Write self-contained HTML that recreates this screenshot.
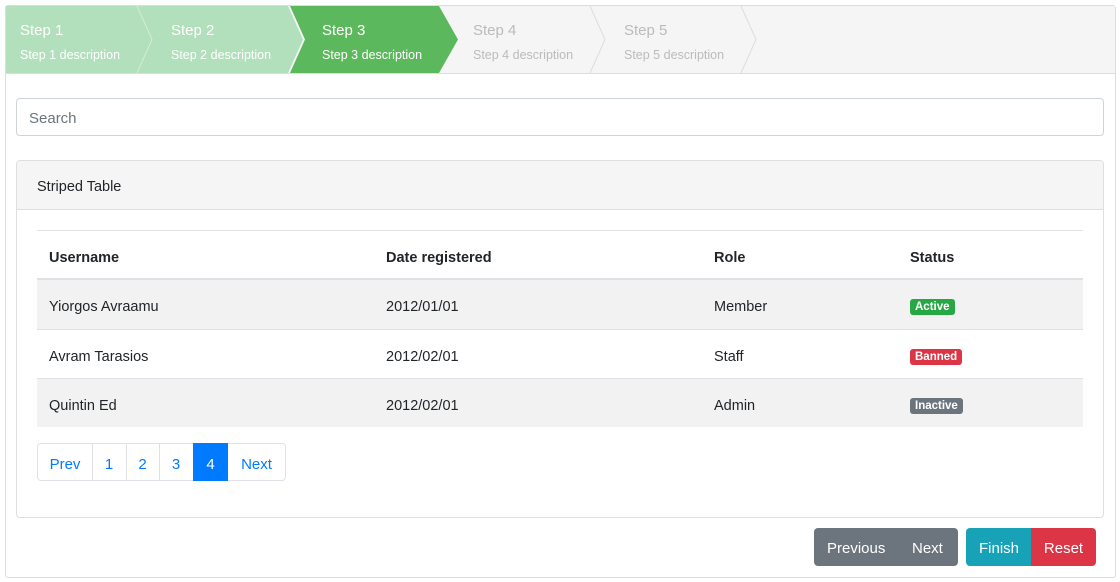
<!DOCTYPE html>
<html><head><meta charset="utf-8"><style>
*{box-sizing:border-box;margin:0;padding:0}
body{width:1120px;height:582px;background:#fff;font-family:"Liberation Sans",sans-serif;font-size:14.5px;color:#212529;position:relative;overflow:hidden}
.a{position:absolute}
.outer{left:5px;top:5px;width:1111px;height:573px;border:1px solid #ddd;border-radius:3px}
.st{position:absolute;font-size:15px}
.sd{position:absolute;font-size:12.5px}
.search{left:16px;top:98px;width:1088px;height:38px;border:1px solid #ced4da;border-radius:4px;padding:11px 12px;color:#6c757d;font-size:15px}
.card{left:16px;top:160px;width:1088px;height:358px;border:1px solid #dfdfdf;border-radius:4px;overflow:hidden}
.ch{height:49px;background:#f5f5f5;border-bottom:1px solid #dfdfdf;padding:18px 20px;font-size:14.5px}
.row{position:absolute;left:37px;width:1046px;height:49px;border-top:1px solid #dee2e6}
.row span{position:absolute;top:19px}
.b{position:absolute;top:19px;font-size:11.5px;font-weight:bold;color:#fff;padding:2px 5px;border-radius:3px}
.pg{position:absolute;top:443px;height:38px;border:1px solid #dee2e6;color:#007bff;text-align:center;padding-top:12px;font-size:15px}
.btn{position:absolute;top:528px;height:38px;color:#fff;font-size:15px;padding-top:12px;text-align:center}
</style></head><body>
<div class="a outer"></div>
<svg class="a" style="left:6px;top:6px" width="1109" height="68">
<rect x="0" y="0" width="1109" height="67" fill="#f5f5f5"/>
<polygon points="0,0 131,0 146,33.5 131,67 0,67" fill="#b2dfbc"/>
<polygon points="131,0 282,0 297,33.5 282,67 131,67 146,33.5" fill="#b2dfbc"/>
<polygon points="284,0 433,0 452,33.5 433,67 284,67 299,33.5" fill="#5cb85c"/>
<polyline points="131,0 146,33.5 131,67" fill="none" stroke="#d6ecd9" stroke-width="1"/>
<polyline points="584,0 599,33.5 584,67" fill="none" stroke="#ddd" stroke-width="1"/>
<polyline points="735,0 750,33.5 735,67" fill="none" stroke="#ddd" stroke-width="1"/>
<line x1="0" y1="67.5" x2="1109" y2="67.5" stroke="#ddd"/>
</svg>
<div class="st" style="left:20px;top:22px;color:#fff">Step 1</div><div class="sd" style="left:20px;top:48px;color:#fff">Step 1 description</div>
<div class="st" style="left:171px;top:22px;color:#fff">Step 2</div><div class="sd" style="left:171px;top:48px;color:#fff">Step 2 description</div>
<div class="st" style="left:322px;top:22px;color:#fff">Step 3</div><div class="sd" style="left:322px;top:48px;color:#fff">Step 3 description</div>
<div class="st" style="left:473px;top:22px;color:#bbb">Step 4</div><div class="sd" style="left:473px;top:48px;color:#bbb">Step 4 description</div>
<div class="st" style="left:624px;top:22px;color:#bbb">Step 5</div><div class="sd" style="left:624px;top:48px;color:#bbb">Step 5 description</div>
<div class="a search">Search</div>
<div class="a card"><div class="ch">Striped Table</div></div>
<div class="row" style="top:230px;font-weight:bold;border-bottom:2px solid #dee2e6;height:50px"><span style="left:12px">Username</span><span style="left:349px">Date registered</span><span style="left:677px">Role</span><span style="left:873px">Status</span></div>
<div class="row" style="top:280px;background:#f2f2f2;border-top:none"><span style="left:12px">Yiorgos Avraamu</span><span style="left:349px">2012/01/01</span><span style="left:677px">Member</span><b class="b" style="left:873px;background:#28a745">Active</b></div>
<div class="row" style="top:329px"><span style="left:12px">Avram Tarasios</span><span style="left:349px">2012/02/01</span><span style="left:677px">Staff</span><b class="b" style="left:873px;background:#dc3545">Banned</b></div>
<div class="row" style="top:378px;background:#f2f2f2"><span style="left:12px">Quintin Ed</span><span style="left:349px">2012/02/01</span><span style="left:677px">Admin</span><b class="b" style="left:873px;background:#6c757d">Inactive</b></div>
<div class="pg" style="left:37px;width:56px;border-radius:4px 0 0 4px">Prev</div>
<div class="pg" style="left:92px;width:35px;border-left:none">1</div>
<div class="pg" style="left:126px;width:34px;border-left:none">2</div>
<div class="pg" style="left:159px;width:35px;border-left:none">3</div>
<div class="pg" style="left:193px;width:35px;background:#007bff;border-color:#007bff;color:#fff">4</div>
<div class="pg" style="left:228px;width:58px;border-left:none;border-radius:0 4px 4px 0">Next</div>
<div class="btn" style="left:814px;width:144px;background:#6c757d;border-radius:4px"><span style="position:absolute;left:13px">Previous</span><span style="position:absolute;left:98px">Next</span></div>
<div class="btn" style="left:966px;width:66px;background:#17a2b8;border-radius:4px 0 0 4px">Finish</div>
<div class="btn" style="left:1031px;width:65px;background:#dc3545;border-radius:0 4px 4px 0">Reset</div>
</body></html>
